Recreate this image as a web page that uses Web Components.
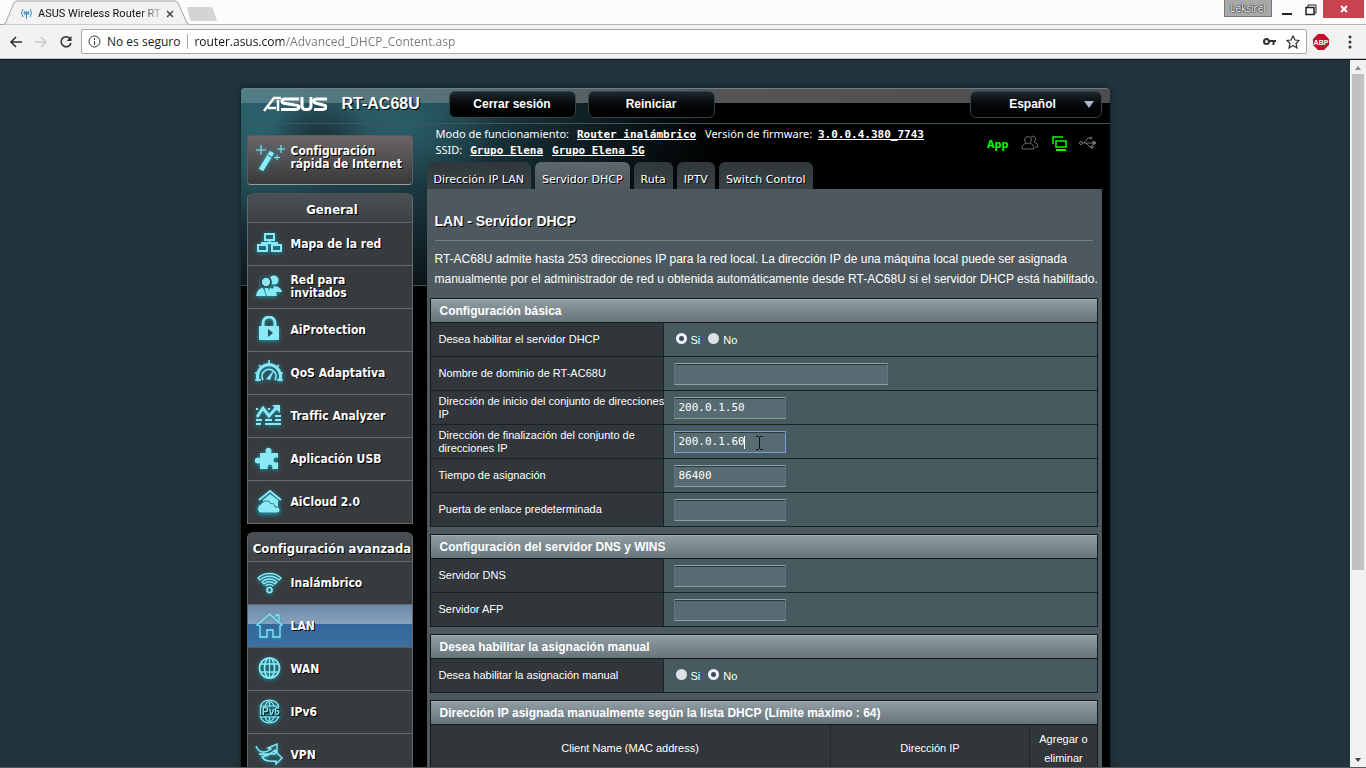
<!DOCTYPE html>
<html lang="es">
<head>
<meta charset="utf-8">
<title>ASUS Wireless Router RT-AC68U</title>
<style>
    html, body { height: 100%; margin: 0; }
    body { overflow: hidden; font-family: "Liberation Sans", Arial, sans-serif; font-size: 12px; }
</style>
</head>
<body>
<browser-window>
    <router-page>
        <router-header slot="header" model="RT-AC68U"></router-header>
        <quick-setup slot="side"></quick-setup>
        <menu-group slot="side" heading="General">
            <menu-item icon="map">Mapa de la red</menu-item>
            <menu-item icon="guests">Red para<br>invitados</menu-item>
            <menu-item icon="lock">AiProtection</menu-item>
            <menu-item icon="gauge">QoS Adaptativa</menu-item>
            <menu-item icon="traffic">Traffic Analyzer</menu-item>
            <menu-item icon="puzzle">Aplicación USB</menu-item>
            <menu-item icon="cloud">AiCloud 2.0</menu-item>
        </menu-group>
        <menu-group slot="side" heading="Configuración avanzada">
            <menu-item icon="wifi">Inalámbrico</menu-item>
            <menu-item icon="home" active>LAN</menu-item>
            <menu-item icon="globe">WAN</menu-item>
            <menu-item icon="ipv6">IPv6</menu-item>
            <menu-item icon="vpn">VPN</menu-item>
        </menu-group>
        <status-bar></status-bar>
        <page-tabs tabs="Dirección IP LAN|Servidor DHCP|Ruta|IPTV|Switch Control" selected="1"></page-tabs>
        <content-panel heading="LAN - Servidor DHCP">
            <span slot="description">RT-AC68U admite hasta 253 direcciones IP para la red local. La dirección IP de una máquina local puede ser asignada<br>manualmente por el administrador de red u obtenida automáticamente desde RT-AC68U si el servidor DHCP está habilitado.</span>
            <form-section heading="Configuración básica">
                <radio-field label="Desea habilitar el servidor DHCP" value="Si"></radio-field>
                <text-field label="Nombre de dominio de RT-AC68U" size="wide"></text-field>
                <text-field label="Dirección de inicio del conjunto de direcciones|IP" value="200.0.1.50"></text-field>
                <text-field label="Dirección de finalización del conjunto de|direcciones IP" value="200.0.1.60" editing></text-field>
                <text-field label="Tiempo de asignación" value="86400"></text-field>
                <text-field label="Puerta de enlace predeterminada"></text-field>
            </form-section>
            <form-section heading="Configuración del servidor DNS y WINS">
                <text-field label="Servidor DNS"></text-field>
                <text-field label="Servidor AFP"></text-field>
            </form-section>
            <form-section heading="Desea habilitar la asignación manual">
                <radio-field label="Desea habilitar la asignación manual" value="No"></radio-field>
            </form-section>
            <form-section heading="Dirección IP asignada manualmente según la lista DHCP (Límite máximo : 64)">
                <client-table></client-table>
            </form-section>
        </content-panel>
    </router-page>
</browser-window>

<script>
const ICONS = {
    map: `<path d="M10 4h9v6h-9zM3 15h9v6H3zM17 15h9v6h-9zM14.500 10v3M7 15v-2h15v2" stroke-width="2"/>`,
    guests: `<g fill="currentColor" stroke="none"><circle cx="19" cy="7" r="4.500"/><path d="M16 22l3-9c5 0 8 4 8 6h-6z"/><circle cx="11" cy="9" r="5" stroke="#3a4145"/><path d="M1 23c1-5 3-8 7-8l3 8zM12 23l3-8c4 0 6 3 7 8zM10 15h3l1 3-2 5-2-5z"/></g>`,
    lock: `<path d="M8 11V7a6 6 0 0 1 12 0v4" stroke-width="3"/><path d="M4 10h20v14H4z" fill="currentColor" stroke="none"/><path d="M13 13v8l5-4z" fill="#26505a" stroke="none"/>`,
    gauge: `<path d="M3.500 22A11.500 11.500 0 1 1 24.500 22" stroke-width="3"/><path d="M8 21A7 7 0 1 1 20 21M14 1v4M4 6l3 3M24 6l-3 3M0 14h4M24 14h4M0 21h6M22 21h6"/><path d="M11 20l8-9-4 10z" fill="currentColor" stroke="none"/>`,
    traffic: `<path d="M2 15l6-9 6 8 8-9" stroke-width="3"/><path d="M17 3h8v8z" fill="currentColor" stroke="none"/><path d="M1 7h2M13 7h2M1 18h6M10 18h7M20 18h6M1 22h5M10 22h16M20 14h6" stroke-width="2"/>`,
    puzzle: `<path d="M5 8h6c-3-7 8-7 5 0h7v5c-6-3-6 7 0 4v7h-6c2-6-6-6-4 0H5v-6c-7 3-7-8 0-5z" fill="currentColor" stroke="none"/>`,
    cloud: `<path d="M4 12L15 3l11 9" stroke-width="2"/><path d="M8 12l7-6 8 6v8H8z" fill="currentColor" stroke="none"/><path d="M5 25a5 5 0 0 1 1-9c2-4 9-4 10 0 2-1 4 0 4 3h2a3 3 0 1 1 0 6z" fill="currentColor" stroke="#2c6f7c" stroke-width="1"/>`,
    wifi: `<path d="M3 9c6-6 17-6 23 0l-2 2c-5-5-14-5-19 0zM7 13c4-4 11-4 15 0l-2 2c-3-3-8-3-11 0zM10.500 17c2-2 6-2 8 0" stroke-width="1.300"/><circle cx="14.500" cy="21" r="2.500"/>`,
    home: `<path d="M2 13L14.500 2 27 13l-2 1v11h-7v-7h-6v7H5V14zM21 5V3h3v6" stroke-width="1.300"/>`,
    globe: `<circle cx="14.500" cy="13" r="10"/><ellipse cx="14.500" cy="13" rx="5" ry="10"/><path d="M5 9h19M5 17h19M14.500 3v20" stroke-width="1.300"/>`,
    ipv6: `<path d="M5 9a10 10 0 0 1 19 0M5 18a10 10 0 0 0 19 0M10 9c1-7 8-7 9 0M10 18c1 7 8 7 9 0M14.500 3v6M14.500 19v5M6 8h17M6 19h17" stroke-width="1.200"/><text x="14.500" y="17" text-anchor="middle" font-family="Liberation Sans" font-weight="bold" font-size="10" fill="currentColor" stroke="none">IPv6</text>`,
    vpn: `<path d="M1 5c3 8 10 7 15 3l-3-1 9-4v8l-2-2c-4 4-8 6-16 4l16 0v-3l7 7-6 6v-3c-7 1-12-1-14-4l7-2" stroke-width="1.400"/>`
};

function icon(name) {
    return `<svg viewBox="0 0 28 28" width="28" height="28" fill="none" stroke="currentColor" stroke-width="1.700" aria-hidden="true">${ICONS[name]}</svg>`;
}

class BaseElement extends HTMLElement {
    constructor() {
        super();
        this.attachShadow({ mode: 'open' });
    }

    connectedCallback() {
        this._render();
    }

    attr(name) {
        return this.getAttribute(name) || "";
    }
}

class BrowserWindow extends BaseElement {
    _render() {
        this.shadowRoot.innerHTML = `
            <style>
                :host { display: flex; flex-direction: column; height: 100vh; background: #22333b; font-family: "Open Sans", "Noto Sans", sans-serif; color: #222; }
                button { border: 0; padding: 0; background: none; color: inherit; display: grid; place-items: center; }
                .strip { display: flex; height: 25px; background: #fcfcfc; border-bottom: 1px solid #b4b4b4; box-sizing: border-box; }
                .tab { position: relative; width: 190px; height: 25px; box-sizing: border-box; padding: 2px 18px 0 20px; display: flex; align-items: center; gap: 5px; font: 11px Roboto, "Open Sans", sans-serif; }
                .tab svg { flex: none; }
                .tab .shape { position: absolute; inset: 0; z-index: -1; }
                .strip, .tab { isolation: isolate; }
                .tab a { flex: 1; white-space: nowrap; color: #111; text-decoration: none; -webkit-mask: linear-gradient(90deg, #000 82%, #0003); }
                .new { margin: 7px 0 0 -4px; align-self: flex-start; }
                .controls { display: flex; margin-left: auto; align-items: flex-start; }
                .user { background: #a9a9a9; border: 1px solid #777; border-top: 0; width: 48px; height: 17px; box-sizing: border-box; font: 10px "Open Sans", sans-serif; color: #fff; text-shadow: 0 0 1px #000, 0 0 2px #000; margin-right: 3px; }
                .win { width: 24px; height: 17px; }
                .close { width: 41px; height: 18px; background: #c74350; color: #fff; margin-right: 2px; }
                .toolbar { display: flex; align-items: center; height: 34px; background: #f2f2f2; box-sizing: border-box; border-bottom: 1px solid #c5c5c5; padding: 0 4px 0 3px; }
                .toolbar > button { width: 25px; height: 24px; }
                .toolbar > .abp { margin-right: 4px; }
                .omni { flex: 1; display: flex; align-items: center; height: 25px; box-sizing: border-box; border: 1px solid #a9a9a9; border-radius: 2px; background: #fff; margin: 0 1px 0 3px; padding: 0 6px; font-size: 12px; gap: 6px; }
                .omni label { border-right: 1px solid #aaa; padding-right: 7px; line-height: 15px; }
                input { flex: 1; min-width: 0; border: 0; outline: 0; padding: 0; height: 21px; font: inherit; -webkit-text-fill-color: transparent; background: linear-gradient(90deg, #111 90px, #777 90px); -webkit-background-clip: text; background-clip: text; }
                .star { margin-left: 4px; }
                .view { flex: 1; min-height: 0; display: flex; border-top: 1px solid #0c151b; border-bottom: 1px solid #53595d; }
                .page { flex: 1; min-width: 0; overflow: hidden; }
                .bar { width: 16px; background: #f1f1f1; display: flex; flex-direction: column; align-items: center; }
                .bar svg { height: 14px; }
                .track { flex: 1; width: 12px; }
                .thumb { height: 73%; background: #c1c1c1; }
            </style>
            <div class="strip">
                <div class="tab">
                    <svg class="shape" viewBox="0 0 190 25" width="190" height="25"><path d="M0 25L5 24 14 3q1-2 3-2h158q2 0 3 2l9 20 3 2z" fill="#f2f2f2" stroke="#a4a4a4"/></svg>
                    <svg width="13" height="13" viewBox="0 0 13 13" fill="none" stroke="#2c8fc0"><path d="M3 2Q0 6 3 10M10 2q3 4 0 8M5 4Q3 6 5 8M8 4q2 2 0 4M6.500 7v5"/><circle cx="6.500" cy="6" r="1" fill="#2c8fc0"/></svg>
                    <a href="#">ASUS Wireless Router RT</a>
                    <button aria-label="Cerrar pestaña"><svg width="8" height="8" stroke="#444" stroke-width="1.500"><path d="M1 1l6 6M7 1L1 7"/></svg></button>
                </div>
                <button class="new" aria-label="Nueva pestaña"><svg width="31" height="14"><path d="M1 0h23q2 0 3 2l4 12H7q-2 0-3-2z" fill="#d4d4d4"/></svg></button>
                <div class="controls">
                    <button class="user">Leksirel</button>
                    <button class="win" aria-label="Minimizar"><svg width="10" height="14"><path d="M0 12h10" stroke="#222" stroke-width="2"/></svg></button>
                    <button class="win" aria-label="Restaurar"><svg width="12" height="14" fill="none" stroke="#222"><path d="M3 5V3h8v8H9"/><path d="M1 5.500h8v7H1z" stroke-width="1.500"/></svg></button>
                    <button class="close" aria-label="Cerrar"><svg width="8" height="8" stroke="#fff" stroke-width="2"><path d="M1 1l6 6M7 1L1 7"/></svg></button>
                </div>
            </div>
            <div class="toolbar">
                <button aria-label="Atrás"><svg width="14" height="12" fill="none" stroke="#333" stroke-width="1.600"><path d="M13 6H2M7 1L2 6l5 5"/></svg></button>
                <button aria-label="Adelante"><svg width="14" height="12" fill="none" stroke="#ccc" stroke-width="1.600"><path d="M1 6h11M7 1l5 5-5 5"/></svg></button>
                <button aria-label="Recargar"><svg width="14" height="14" fill="none" stroke="#333" stroke-width="1.600"><path d="M11 3.500A5 5 0 1 0 12 8"/><path d="M12.500 1v5h-5z" fill="#333" stroke="none"/></svg></button>
                <div class="omni">
                    <svg width="13" height="13" fill="none" stroke="#333"><circle cx="6.500" cy="6.500" r="5.500"/><path d="M6.500 6v4M6.500 3v2"/></svg>
                    <label for="url">No es seguro</label>
                    <input id="url" value="router.asus.com/Advanced_DHCP_Content.asp">
                    <svg width="13" height="9" fill="none" stroke="#333" stroke-width="2"><circle cx="3.500" cy="4.500" r="2.500"/><path d="M6 4h7M10.500 4v4"/></svg>
                    <svg class="star" width="14" height="14" viewBox="0 0 14 14" fill="none" stroke="#333" stroke-width="1.200"><path d="M7 1l2 4 4 .5-3 3 1 4.500-4-2.500-4 2.500 1-4.500-3-3L5 5z"/></svg>
                </div>
                <button class="abp" aria-label="ABP"><svg width="16" height="16" viewBox="0 0 16 16"><path d="M5 0h6l5 5v6l-5 5H5l-5-5V5z" fill="#c70d2c"/><text x="8" y="11" text-anchor="middle" font-size="7" font-weight="bold" fill="#fff" font-family="Liberation Sans">ABP</text></svg></button>
                <button aria-label="Menú"><svg width="4" height="14" fill="#333"><circle cx="2" cy="2" r="1.500"/><circle cx="2" cy="7" r="1.500"/><circle cx="2" cy="12" r="1.500"/></svg></button>
            </div>
            <div class="view">
                <div class="page"><slot></slot></div>
                <div class="bar">
                    <svg width="8"><path d="M1 10l3-4 3 4z" fill="#888"/></svg>
                    <div class="track"><div class="thumb"></div></div>
                    <svg width="8"><path d="M1 5l3 4 3-4z" fill="#444"/></svg>
                </div>
            </div>
        `;
    }
}

class RouterPage extends BaseElement {
    _render() {
        this.shadowRoot.innerHTML = `
            <style>
                :host { display: block; padding-top: 28px; font-family: "Liberation Sans", Arial, sans-serif; color: #fff; }
                .frame { max-width: 869px; margin: 0 auto; border-radius: 4px 4px 0 0; background:
                    linear-gradient(#3c5058, #3c5058) 0 197px / 186px 1px no-repeat,
                    radial-gradient(ellipse 50px 46px at 78px 54px, #14242bcc, transparent) no-repeat,
                    radial-gradient(ellipse 90px 60px at 170px 40px, #2f6f7a88, transparent) no-repeat,
                    radial-gradient(ellipse 90px 90px at 20px 50px, #2f6f7a99, transparent) no-repeat,
                    linear-gradient(90deg, transparent 140px, #000 480px) 0 0 / 100% 198px no-repeat,
                    linear-gradient(#2b5964, #1c3a43 110px, #0c171c 198px) 0 0 / 100% 198px no-repeat,
                    #000; box-shadow: 0 0 6px #101c22; }
                .cols { display: grid; grid-template-columns: 166px minmax(0, 1fr); gap: 14px; padding: 0 8px 0 6px; }
                nav { display: flex; flex-direction: column; gap: 8px; padding-top: 11px; }
            </style>
            <div class="frame">
                <slot name="header"></slot>
                <div class="cols">
                    <nav><slot name="side"></slot></nav>
                    <main><slot></slot></main>
                </div>
            </div>
        `;
    }
}

class RouterHeader extends BaseElement {
    _render() {
        this.shadowRoot.innerHTML = `
            <style>
                :host { display: flex; align-items: center; height: 36px; box-sizing: border-box; padding: 0 8px 4px 22px; border-top: 1px solid #6d7f84; border-bottom: 1px solid #3f565c; border-radius: 4px 4px 0 0; background: linear-gradient(90deg, #5b868dcc, #6d6d6dcc 45%, #606062cc) 0 0 / 100% 14px no-repeat; }
                h1 { font-size: 16px; line-height: 20px; margin: 0 0 0 15px; width: 107px; text-shadow: 1px 1px #000; }
                button, select { height: 27px; border: 1px solid #34444a; border-radius: 6px; background: linear-gradient(#1b292f, #050708 50%, #000); color: #fff; font: bold 12px "Liberation Sans", Arial, sans-serif; }
                button { width: 127px; margin-right: 12px; padding: 0; }
                .lang { margin-left: auto; position: relative; }
                select { appearance: none; width: 132px; text-align-last: center; padding: 0 6px 0 0; }
                .lang svg { position: absolute; right: 8px; top: 10px; }
            </style>
            <svg width="64" height="16" viewBox="0 0 64 16" fill="none" stroke="#fff" stroke-width="3" aria-label="ASUS"><path d="M1 15L11 2h7M5 12h8M15 4v11" stroke-width="2.500"/><path d="M36 3H22q-3 0-3 2t3 2.500l10 1.500q4 0 4 2t-3 2.500H18M39 1v9q0 3.500 4 3.500h1q4 0 4-3.500V1M64 3H54q-3 0-3 2t3 2.500l6 1.500q3 0 3 2t-3 2.500h-9"/></svg>
            <h1>${this.attr("model")}</h1>
            <button>Cerrar sesión</button>
            <button>Reiniciar</button>
            <div class="lang">
                <select aria-label="Idioma"><option>Español</option></select>
                <svg width="10" height="8"><path d="M0 0h10L5 7z" fill="#a8b4c8"/></svg>
            </div>
        `;
    }
}

class QuickSetup extends BaseElement {
    _render() {
        this.shadowRoot.innerHTML = `
            <style>
                :host { display: block; }
                a { display: flex; align-items: center; gap: 4px; height: 50px; box-sizing: border-box; padding: 0 7px 5px; border: 1px solid #5c5c5f; border-bottom-color: #9a9b9b; border-radius: 4px; background: linear-gradient(#6a6567, #4c4b4d 60%, #393939); color: #fff; text-decoration: none; font: bold 12px/13px "DejaVu Sans Condensed", Verdana, sans-serif; white-space: nowrap; text-shadow: 1px 1px #000; }
                svg { flex: none; filter: drop-shadow(0 0 2px #1d9fb5); }
            </style>
            <a href="#">
                <svg width="32" height="32" viewBox="0 0 32 32" fill="none"><path d="M6 28L17 10" stroke="#8cecf8" stroke-width="5"/><path d="M13 13l5 3" stroke="#257080"/><path d="M6 3v10M1 8h10M26 3v8M22 7h8M22 13v5M19 15.500h6" stroke="#8cecf8"/></svg>
                <span>Configuración<br>rápida de Internet</span>
            </a>
        `;
    }
}

class MenuGroup extends BaseElement {
    _render() {
        this.shadowRoot.innerHTML = `
            <style>
                :host { display: block; border: 1px solid #65696c; border-top-color: #4c5254; border-radius: 6px 6px 0 0; background: #383b3e; overflow: hidden; }
                h2 { margin: 0; height: 29px; box-sizing: border-box; padding-left: 5px; border-bottom: 1px solid #65696c; font: bold 13px/32px "DejaVu Sans Condensed", Verdana, sans-serif; text-align: center; white-space: nowrap; background: linear-gradient(#4a5154, #3b4144); text-shadow: 1px 1px #000; }
            </style>
            <h2>${this.attr("heading")}</h2>
            <slot></slot>
        `;
    }
}

class MenuItem extends BaseElement {
    _render() {
        this.shadowRoot.innerHTML = `
            <style>
                :host { display: block; border-bottom: 1px solid #65696c; }
                :host(:last-of-type) { border-bottom: 0; }
                :host([active]) { border-bottom-color: #5d5a50; background: linear-gradient(#6a89a9, #8aa2bd 45%, #35669a 46%, #3d6e9f); }
                a { display: flex; align-items: center; gap: 8px; height: 42px; padding: 0 0 0 7px; color: #fff; text-decoration: none; font: bold 12px/13px "DejaVu Sans Condensed", Verdana, sans-serif; white-space: nowrap; text-shadow: 1px 1px #000; }
                svg { color: #8be9f5; flex: none; filter: drop-shadow(0 1px 2px #12a0b8); }
            </style>
            <a href="#">${icon(this.attr("icon"))}<span><slot></slot></span></a>
        `;
    }
}

class StatusBar extends BaseElement {
    _render() {
        this.shadowRoot.innerHTML = `
            <style>
                :host { display: flex; justify-content: space-between; padding: 2px 5px 0 9px; height: 36px; font: 11px/16px "DejaVu Sans", Tahoma, sans-serif; white-space: nowrap; }
                .line { font-family: "Noto Sans", sans-serif; height: 16px; }
                .line a { color: #fff; font: bold 11px/16px "DejaVu Sans Mono", monospace; margin: 0 6px 0 5px; }
                .line a + a { margin-left: 3px; }
                .icons { display: flex; align-items: center; gap: 12px; height: 34px; color: #555; }
                .icons a { color: #0f0; font: bold 11px "Open Sans", sans-serif; text-decoration: none; }
            </style>
            <div>
                <div class="line">Modo de funcionamiento: <a href="#">Router inalámbrico</a> Versión de firmware: <a href="#">3.0.0.4.380_7743</a></div>
                <div class="line">SSID: <a href="#">Grupo Elena</a><a href="#">Grupo Elena 5G</a></div>
            </div>
            <div class="icons">
                <a href="#">App</a>
                <svg width="18" height="16" fill="none" stroke="#666"><circle cx="7" cy="5" r="3.500"/><path d="M1 14q0-5 4-5.500M1 14h12q0-5-4-5.500M10 2q2-2 4 0t-1 5q4 1 4 5h-3"/></svg>
                <svg width="16" height="16" fill="none" stroke="#0f0" stroke-width="1.500"><path d="M2 9V2h10M5 6h10v6H5z"/><path d="M5 15h10" stroke-width="2"/></svg>
                <svg width="18" height="14" fill="none" stroke="#777"><path d="M3 7h13M5 7l4-5h2M7 7l4 4h2"/><circle cx="2" cy="7" r="1.500"/><path d="M14 5l3 2-3 2z" fill="#777"/><circle cx="12" cy="2" r="1"/><path d="M12 10h2v2h-2z"/></svg>
            </div>
        `;
    }
}

class PageTabs extends BaseElement {
    _render() {
        const selected = Number(this.attr("selected"));
        const links = this.attr("tabs").split("|").map((t, i) =>
            `<a href="#" ${i === selected ? 'aria-current="page"' : ""}>${t}</a>`).join("");
        this.shadowRoot.innerHTML = `
            <style>
                :host { display: flex; gap: 4px; }
                a { height: 27px; box-sizing: border-box; padding: 4px 7px 0; border-radius: 6px 6px 0 0; background: linear-gradient(#30373b, #3a4347); color: #fff; text-decoration: none; font: 11px/28px "DejaVu Sans", Verdana, sans-serif; white-space: nowrap; text-shadow: 1px 1px #000; }
                a[aria-current] { background: linear-gradient(#5d676c, #4d595e); }
            </style>
            ${links}
        `;
    }
}

class ContentPanel extends BaseElement {
    _render() {
        this.shadowRoot.innerHTML = `
            <style>
                :host { display: block; background: #4d595e; padding: 22px 4px 20px 3px; }
                h2 { margin: 0 5px 8px; padding-bottom: 9px; border-bottom: 1px solid #6d8085; font-size: 14px; line-height: 20px; text-shadow: 1px 1px #000; }
                p { margin: 0 0 9px 5px; font-size: 12px; line-height: 20px; white-space: nowrap; }
                .sections { display: flex; flex-direction: column; gap: 7px; }
            </style>
            <h2>${this.attr("heading")}</h2>
            <p><slot name="description"></slot></p>
            <div class="sections"><slot></slot></div>
        `;
    }
}

class FormSection extends BaseElement {
    _render() {
        this.shadowRoot.innerHTML = `
            <style>
                :host { display: block; border: 1px solid #101a1e; border-bottom: 0; }
                h3 { margin: 0; padding: 0 9px; height: 24px; box-sizing: border-box; border-top: 1px solid #a3afb3; border-bottom: 1px solid #101a1e; background: linear-gradient(#8f9ca2, #67757b); font-size: 12px; line-height: 22px; }
            </style>
            <h3>${this.attr("heading")}</h3>
            <slot></slot>
        `;
    }
}

const FIELD_STYLE = `
    :host { display: grid; grid-template-columns: 233px 1fr; height: 34px; box-sizing: border-box; border-bottom: 1px solid #16232a; font-size: 11px; line-height: 13px; }
    .name { display: flex; align-items: center; padding-left: 8px; background: #30363a; border-right: 1px solid #16232a; white-space: nowrap; }
    .value { display: flex; align-items: center; padding-left: 10px; background: #475a5f; }
`;

class TextField extends BaseElement {
    _render() {
        this.shadowRoot.innerHTML = `
            <style>
                ${FIELD_STYLE}
                .value { position: relative; }
                input { width: 112px; height: 22px; box-sizing: border-box; padding: 0 4px; border: 1px solid #62767d; border-top-color: #91a2a7; border-bottom-color: #91a2a7; background: #576b72; color: #fff; outline: 0; box-shadow: inset 0 1px #2c3a40; font: 11px "DejaVu Sans Mono", monospace; }
                :host([size=wide]) input { width: 214px; }
                :host([editing]) input { border-color: #7d9bd6; background: linear-gradient(#fff, #fff) 69px 4px / 1px 13px no-repeat #576b72; }
                .pointer { position: absolute; left: 91px; top: 10px; }
            </style>
            <label class="name" for="field"><span>${this.attr("label").replace("|", "<br>")}</span></label>
            <div class="value">
                <input id="field" type="text" value="${this.attr("value")}">
                ${this.hasAttribute("editing") ? `<svg class="pointer" width="9" height="16" fill="none" stroke="#111"><path d="M1 1.500h2.500l1 1 1-1H8M4.500 2v11M1 14.500h2.500l1-1 1 1H8"/></svg>` : ""}
            </div>
        `;
    }
}

class RadioField extends BaseElement {
    _render() {
        const radios = ["Si", "No"].map(v => `
            <input type="radio" name="choice" id="${v}" ${v === this.attr("value") ? "checked" : ""}><label for="${v}">${v}</label>`).join("");
        this.shadowRoot.innerHTML = `
            <style>
                ${FIELD_STYLE}
                input { appearance: none; width: 11px; height: 11px; margin: 0 4px 2px 2px; border-radius: 50%; background: #dde1e4; }
                input:checked { background: radial-gradient(circle, #3d4a50 0 2px, #eef 3px); }
                .value label { margin-right: 6px; padding-top: 2px; }
            </style>
            <div class="name">${this.attr("label")}</div>
            <div class="value" role="radiogroup" aria-label="${this.attr("label")}">${radios}</div>
        `;
    }
}

class ClientTable extends BaseElement {
    _render() {
        this.shadowRoot.innerHTML = `
            <style>
                :host { display: block; }
                table { width: 100%; border-collapse: collapse; table-layout: fixed; }
                th { height: 47px; padding: 0; background: #30363a; border-right: 1px solid #1e272b; border-bottom: 1px solid #16232a; font-size: 11px; font-weight: normal; line-height: 19px; text-align: center; }
                th:last-child { border-right: 0; }
            </style>
            <table>
                <colgroup><col style="width:60%"><col style="width:30%"><col style="width:10%"></colgroup>
                <tr><th>Client Name (MAC address)</th><th>Dirección IP</th><th>Agregar o<br>eliminar</th></tr>
            </table>
        `;
    }
}

customElements.define('browser-window', BrowserWindow);
customElements.define('router-page', RouterPage);
customElements.define('router-header', RouterHeader);
customElements.define('quick-setup', QuickSetup);
customElements.define('menu-group', MenuGroup);
customElements.define('menu-item', MenuItem);
customElements.define('status-bar', StatusBar);
customElements.define('page-tabs', PageTabs);
customElements.define('content-panel', ContentPanel);
customElements.define('form-section', FormSection);
customElements.define('text-field', TextField);
customElements.define('radio-field', RadioField);
customElements.define('client-table', ClientTable);
</script>
</body>
</html>
